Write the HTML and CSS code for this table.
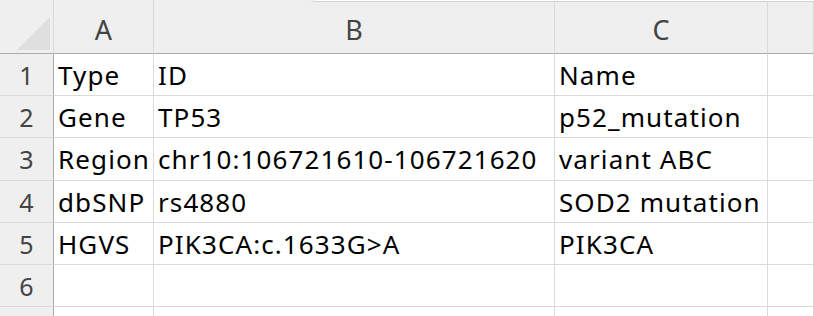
FILE: index.html
```html
<!DOCTYPE html>
<html lang="en">
<head>
    <meta charset="UTF-8">
    <meta name="viewport" content="width=device-width, initial-scale=1.0">
    <title>Sheet1</title>
    <link rel="stylesheet" href="styles.css">
</head>
<body>
    <div class="sheet">
        <div class="formula-edge"></div>

        <div class="grid">
            <!-- column headers -->
            <div class="corner">
                <svg width="53" height="53" viewBox="0 0 53 53">
                    <polygon points="17,50 50,50 50,17" fill="#dfdfdf"/>
                </svg>
            </div>
            <div class="col-head">A</div>
            <div class="col-head">B</div>
            <div class="col-head">C</div>
            <div class="col-head"></div>

            <div class="row-head">1</div>
            <div class="cell">Type</div>
            <div class="cell">ID</div>
            <div class="cell">Name</div>
            <div class="cell"></div>

            <div class="row-head">2</div>
            <div class="cell">Gene</div>
            <div class="cell">TP53</div>
            <div class="cell">p52_mutation</div>
            <div class="cell"></div>

            <div class="row-head">3</div>
            <div class="cell">Region</div>
            <div class="cell">chr10:106721610-106721620</div>
            <div class="cell">variant ABC</div>
            <div class="cell"></div>

            <div class="row-head">4</div>
            <div class="cell">dbSNP</div>
            <div class="cell">rs4880</div>
            <div class="cell">SOD2 mutation</div>
            <div class="cell"></div>

            <div class="row-head">5</div>
            <div class="cell">HGVS</div>
            <div class="cell">PIK3CA:c.1633G&gt;A</div>
            <div class="cell">PIK3CA</div>
            <div class="cell"></div>

            <div class="row-head">6</div>
            <div class="cell"></div>
            <div class="cell"></div>
            <div class="cell"></div>
            <div class="cell"></div>

            <div class="row-head"></div>
            <div class="cell"></div>
            <div class="cell"></div>
            <div class="cell"></div>
            <div class="cell"></div>
        </div>
    </div>
</body>
</html>
```

FILE: styles.css
```css
:root {
    --head-bg: #efefef;
    --head-text: #444444;
    --grid-line: #dadada;
    --head-line: #acacac;
}

* {
    box-sizing: border-box;
    margin: 0;
    padding: 0;
}

body {
    background: #ffffff;
    font-family: 'Noto Sans', 'Open Sans', sans-serif;
    overflow: hidden;
}

.sheet {
    position: relative;
    width: 814px;
    height: 316px;
    overflow: hidden;
}

/* bottom edge of the formula bar peeking over the headers */
.formula-edge {
    position: absolute;
    left: 309px;
    right: -10px;
    top: -10px;
    height: 12px;
    background: #ffffff;
    border: 1px solid #d2d2d2;
    border-radius: 0 0 0 6px;
    z-index: 2;
}

.grid {
    display: grid;
    grid-template-columns: 54px 100px 401px 213px 1fr;
    grid-template-rows: 54px 42px 42px 43px 42px 42px 42px 42px;
}

.corner {
    background: var(--head-bg);
    border-right: 1px solid var(--grid-line);
    border-bottom: 1px solid var(--head-line);
}

.corner svg {
    display: block;
}

.col-head {
    background: var(--head-bg);
    color: var(--head-text);
    font-size: 27px;
    display: flex;
    align-items: flex-end;
    justify-content: center;
    padding-bottom: 5px;
    border-right: 1px solid var(--grid-line);
    border-bottom: 1px solid var(--head-line);
}

.row-head {
    background: var(--head-bg);
    color: var(--head-text);
    font-size: 25px;
    display: flex;
    align-items: center;
    justify-content: center;
    border-right: 1px solid var(--head-line);
    border-bottom: 1px solid var(--grid-line);
}

.cell {
    color: #000000;
    font-size: 26px;
    letter-spacing: 1.1px;
    white-space: nowrap;
    display: flex;
    align-items: center;
    padding-left: 4px;
    border-right: 1px solid var(--grid-line);
    border-bottom: 1px solid var(--grid-line);
}
```
